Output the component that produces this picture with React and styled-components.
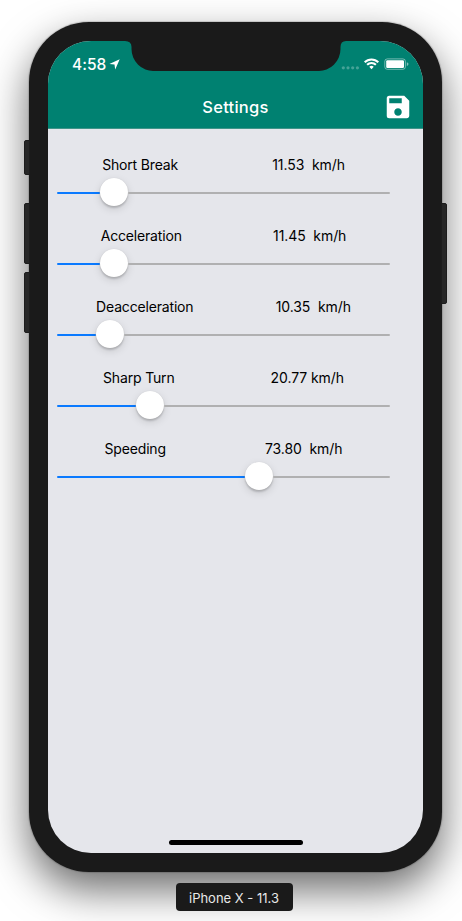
import React from "react";
import styled, { createGlobalStyle } from "styled-components";
import { MdSave } from "react-icons/md";

const GlobalStyle = createGlobalStyle`
  * { box-sizing: border-box; }
  body {
    margin: 0;
    background: #fff;
    font-family: Inter, "Liberation Sans", sans-serif;
    overflow: hidden;
  }
`;

const Stage = styled.main`
  width: 462px;
  height: 921px;
  padding-top: 22px;
  display: flex;
  flex-direction: column;
  align-items: center;
  gap: 11px;
  overflow: hidden;
`;

const Device = styled.div`
  position: relative;
  width: 413px;
  height: 850px;
  flex: none;
  margin-left: 9px;
  padding: 19px;
  border-radius: 60px;
  background: #1a1a1a;
  box-shadow: 0 0 1px 1px rgba(0, 0, 0, 0.15), 0 18px 42px rgba(0, 0, 0, 0.58);
`;

const SideButton = styled.div`
  position: absolute;
  ${(p) => (p.$side === "left" ? "left: -5px; border-radius: 2px 0 0 2px;" : "right: -5px; border-radius: 0 2px 2px 0;")}
  top: ${(p) => p.$top}px;
  width: 6px;
  height: ${(p) => p.$length}px;
  background: #262626;
  border: 1px solid #1c1c1c;
`;

const Screen = styled.div`
  position: relative;
  height: 812px;
  border-radius: 43px;
  background: #e5e6eb;
  overflow: hidden;
  display: flex;
  flex-direction: column;
`;

const Notch = styled.svg`
  position: absolute;
  top: 0;
  left: 77px;
  width: 221px;
  height: 30px;
  fill: #1a1a1a;
`;

const Header = styled.header`
  height: 88px;
  flex: none;
  background: #008171;
  border-bottom: 1px solid #409489;
  color: #fff;
`;

const StatusBar = styled.div`
  height: 44px;
  padding: 2px 14px 0 24px;
  display: flex;
  align-items: center;
  justify-content: space-between;
`;

const StatusGroup = styled.div`
  display: flex;
  align-items: center;
  gap: 3px;
`;

const Clock = styled.span`
  font-size: 15.5px;
  font-weight: 500;
  letter-spacing: 0.05px;
`;

const StatusIcons = styled.svg`
  display: block;
  width: 68px;
  height: 14px;
`;

const NavBar = styled.div`
  height: 43px;
  display: grid;
  grid-template-columns: 1fr auto 1fr;
  align-items: center;
`;

const Title = styled.h1`
  grid-column: 2;
  margin: 0;
  font-size: 16.5px;
  line-height: 20px;
  font-weight: 500;
  letter-spacing: 0.25px;
`;

const SaveButton = styled.button`
  justify-self: end;
  width: 30px;
  height: 30px;
  margin: 1px 10px 0 0;
  padding: 0;
  border: 0;
  background: none;
  color: #fff;
  svg { display: block; }
`;

const SettingsList = styled.section`
  width: 337px;
  margin: 26px 0 0 7px;
  display: flex;
  flex-direction: column;
`;

const Setting = styled.div`
  height: 71px;
`;

const Caption = styled.div`
  height: 20px;
  display: flex;
  justify-content: space-around;
  font-size: 14px;
  line-height: 20px;
  color: #000;
  white-space: pre;
`;

const CaptionText = styled.span`
  letter-spacing: ${(p) => p.$tracking || 0}px;
`;

const Slider = styled.div`
  height: 28px;
  margin: 3px 2px 0;
  display: flex;
  align-items: center;
`;

const Rail = styled.div`
  height: 2px;
  margin-top: 2px;
  border-radius: 1px;
  background: ${(p) => (p.$active ? "#0a7aff" : "#b0b0b1")};
  ${(p) => (p.$active ? "" : "flex: 1;")}
`;

const Thumb = styled.div`
  width: 28px;
  height: 28px;
  flex: none;
  border-radius: 50%;
  background: #fff;
  box-shadow: 0 0 1px rgba(0, 0, 0, 0.12), 0 2px 2px rgba(0, 0, 0, 0.16), 0 3px 8px rgba(0, 0, 0, 0.13);
`;

const HomeIndicator = styled.div`
  width: 134px;
  height: 5px;
  margin: auto 0 8px 121px;
  border-radius: 3px;
  background: #000;
`;

const DeviceLabel = styled.div`
  position: relative;
  width: 117px;
  height: 28px;
  margin-left: 7px;
  padding-right: 1px;
  flex: none;
  border-radius: 4px;
  background: #1a1a1a;
  color: #e8e8e8;
  font-size: 13px;
  line-height: 31px;
  text-align: center;
  white-space: nowrap;
`;

const settings = [
  { name: "Short Break", value: "11.53  km/h", offset: 43 },
  { name: "Acceleration", value: "11.45  km/h", offset: 43 },
  { name: "Deacceleration", value: "10.35  km/h", offset: 39 },
  { name: "Sharp Turn", value: "20.77 km/h", offset: 79 },
  { name: "Speeding", value: "73.80  km/h", offset: 188 },
];

const LocationArrow = () => (
  <svg width="11" height="11" viewBox="0 0 11 11">
    <path d="M10.7.3 6.2 10.6 5.5 5.5.4 4.9Z" fill="#fff" />
  </svg>
);

const SystemIcons = () => (
  <StatusIcons viewBox="0 0 68 14">
    <g fill="#fff" fillOpacity=".27">
      <circle cx="2.3" cy="10.8" r="1.6" />
      <circle cx="7" cy="10.8" r="1.6" />
      <circle cx="11.7" cy="10.8" r="1.6" />
      <circle cx="16.4" cy="10.8" r="1.6" />
    </g>
    <g fill="none" stroke="#fff" strokeWidth="2">
      <path d="M23.7 5.2a9.6 9.6 0 0 1 13.6 0" />
      <path d="M26.1 7.8a6.2 6.2 0 0 1 8.8 0" />
    </g>
    <path d="M28.3 9.8a3.2 3.2 0 0 1 4.4 0L30.5 12.2Z" fill="#fff" />
    <rect x="43.8" y="1.9" width="20.6" height="10.4" rx="2.5" fill="none" stroke="#fff" strokeOpacity=".45" />
    <rect x="45.2" y="3.2" width="17.8" height="7.8" rx="1.2" fill="#fff" />
    <path d="M65.8 5.2q1.7.5 1.7 1.9t-1.7 1.9Z" fill="#fff" fillOpacity=".5" />
  </StatusIcons>
);

const SettingRow = ({ name, value, offset }) => (
  <Setting>
    <Caption>
      <CaptionText $tracking={-0.17}>{name}</CaptionText>
      <CaptionText $tracking={-0.08}>{value}</CaptionText>
    </Caption>
    <Slider>
      <Rail $active style={{ width: offset }} />
      <Thumb />
      <Rail />
    </Slider>
  </Setting>
);

export default function App() {
  return (
    <>
      <GlobalStyle />
      <Stage>
        <Device>
          <SideButton $side="left" $top={118} $length={35} />
          <SideButton $side="left" $top={181} $length={61} />
          <SideButton $side="left" $top={250} $length={61} />
          <SideButton $side="right" $top={181} $length={101} />
          <Screen>
            <Header>
              <StatusBar>
                <StatusGroup>
                  <Clock>4:58</Clock>
                  <LocationArrow />
                </StatusGroup>
                <SystemIcons />
              </StatusBar>
              <NavBar>
                <Title>Settings</Title>
                <SaveButton aria-label="Save">
                  <MdSave size={30} />
                </SaveButton>
              </NavBar>
            </Header>
            <SettingsList>
              {settings.map((s) => (
                <SettingRow key={s.name} {...s} />
              ))}
            </SettingsList>
            <HomeIndicator />
            <Notch viewBox="0 0 221 30">
              <path d="M0 0H221Q215.500 0 215.500 6V8A22 22 0 0 1 193 30H29A22 22 0 0 1 6.500 8V6Q6.500 0 0 0Z" />
            </Notch>
          </Screen>
        </Device>
        <DeviceLabel>iPhone X - 11.3</DeviceLabel>
      </Stage>
    </>
  );
}
